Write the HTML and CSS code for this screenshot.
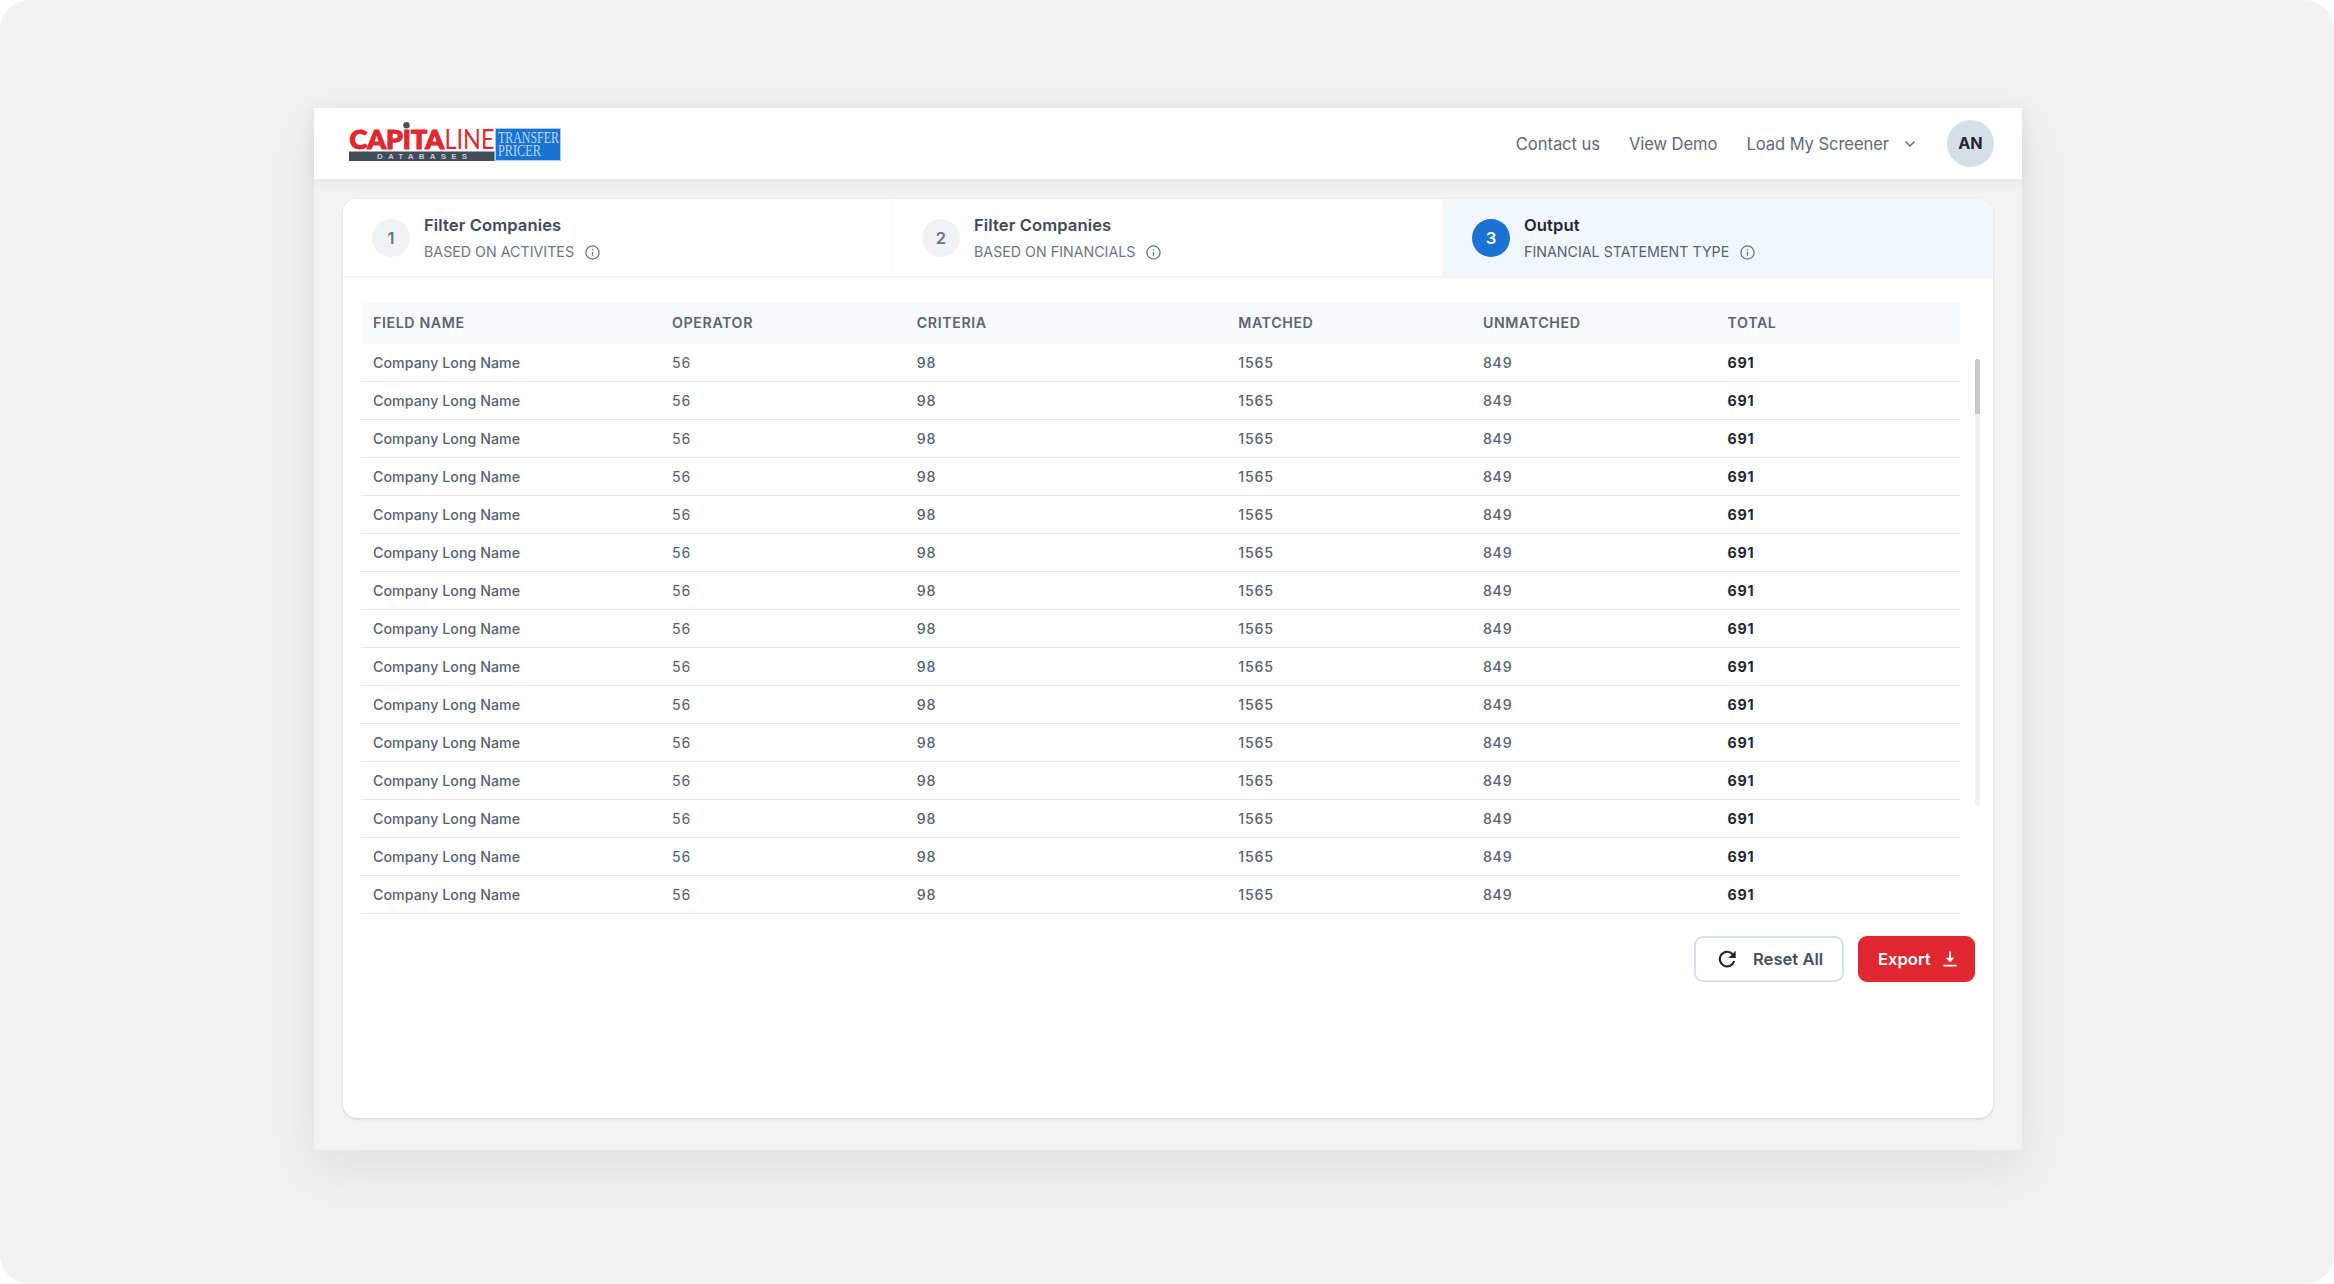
FILE: index.html
```html
<!DOCTYPE html>
<html lang="en">
<head>
    <meta charset="UTF-8">
    <meta name="viewport" content="width=device-width, initial-scale=1.0">
    <title>Capitaline Transfer Pricer</title>
    <link rel="stylesheet" href="styles.css">
</head>
<body>
    <div class="page">
        <div class="window">
            <header>
                <svg class="logo" width="213" height="40" viewBox="0 0 213 40">
                    <text class="logoBold" x="0.5" y="26.500" textLength="94.500" lengthAdjust="spacingAndGlyphs">CAPITA</text>
                    <text class="logoThin" x="95.500" y="26.800" textLength="50" lengthAdjust="spacingAndGlyphs">LINE</text>
                    <circle cx="57.5" cy="3.300" r="3.2" fill="#47525f"/>
                    <rect x="0" y="29.500" width="145.500" height="9.500" fill="#434b57"/>
                    <text class="logoSmall" x="28" y="37.300" textLength="90">DATABASES</text>
                    <rect x="146.500" y="6.500" width="65" height="32" fill="#1a73d2" stroke="#a5cdf0"/>
                    <text class="logoSerif" x="149" y="20.500" textLength="61" lengthAdjust="spacingAndGlyphs">TRANSFER</text>
                    <text class="logoSerif" x="149" y="33.500" textLength="43" lengthAdjust="spacingAndGlyphs">PRICER</text>
                </svg>
                <nav>
                    <a>Contact us</a>
                    <a>View Demo</a>
                    <a>Load My Screener</a>
                    <svg class="chevron" width="12" height="8" viewBox="0 0 12 8"><path d="M1.500 1.500 6 6l4.500-4.500"/></svg>
                    <div class="avatar">AN</div>
                </nav>
            </header>
            <main>
                <div class="tabs">
                    <div class="tab">
                        <div class="number">1</div>
                        <div class="tabText">
                            <div class="title">Filter Companies</div>
                            <div class="subtitle">BASED ON ACTIVITES
                                <svg class="info" viewBox="0 0 16 16"><circle cx="8" cy="8" r="7"/><path d="M8 7.500v4M8 4.300v1.500"/></svg>
                            </div>
                        </div>
                    </div>
                    <div class="tab">
                        <div class="number">2</div>
                        <div class="tabText">
                            <div class="title">Filter Companies</div>
                            <div class="subtitle">BASED ON FINANCIALS
                                <svg class="info" viewBox="0 0 16 16"><circle cx="8" cy="8" r="7"/><path d="M8 7.500v4M8 4.300v1.500"/></svg>
                            </div>
                        </div>
                    </div>
                    <div class="tab active">
                        <div class="number">3</div>
                        <div class="tabText">
                            <div class="title">Output</div>
                            <div class="subtitle">FINANCIAL STATEMENT TYPE
                                <svg class="info" viewBox="0 0 16 16"><circle cx="8" cy="8" r="7"/><path d="M8 7.500v4M8 4.300v1.500"/></svg>
                            </div>
                        </div>
                    </div>
                </div>
                <div class="tableContainer">
                    <table class="results">
                        <thead>
                            <tr>
                                <th class="wide">Field Name</th>
                                <th>Operator</th>
                                <th class="widest">Criteria</th>
                                <th>Matched</th>
                                <th>Unmatched</th>
                                <th>Total</th>
                            </tr>
                        </thead>
                        <tbody id="rows"></tbody>
                    </table>
                    <div class="scrollbar"><div class="thumb"></div></div>
                </div>
                <div class="buttonContainer">
                    <button class="reset">
                        <svg width="18" height="18" viewBox="0 0 18 18"><path class="arc" d="M14.600 4.200A7.300 7.300 0 1 0 16.200 11"/><path class="head" d="M17.700.8v7.200h-7.200z"/></svg>
                        Reset All
                    </button>
                    <button class="export">
                        Export
                        <svg width="14" height="16" viewBox="0 0 14 16"><path d="M7 .5v9M.5 14.700h13" /><path class="head" d="M2.800 6.800h8.400L7 11.500z"/></svg>
                    </button>
                </div>
            </main>
        </div>
    </div>

    <script>

        const rows = document.getElementById("rows");
        const numberOfRows = 15;

        for (let i = 0; i < numberOfRows; i++) {
            rows.innerHTML += `<tr>
                <td class="name">Company Long Name</td>
                <td class="operator">56</td>
                <td>98</td>
                <td>1565</td>
                <td>849</td>
                <td class="total">691</td>
            </tr>`;
        }

    </script>

</body>
</html>
```

FILE: styles.css
```css
* {
    box-sizing: border-box;
}

body {
    margin: 0;
    background-color: #fff;
    font-family: Inter, "Liberation Sans", sans-serif;
    color: #4a5565;
}

.page {
    width: 2334px;
    height: 1284px;
    padding: 108px 312px 0 314px;
    background-color: #f2f2f2;
    border-radius: 30px;
    overflow: hidden;
}

.window {
    width: 1708px;
    height: 1042px;
    background-color: #f3f3f3;
    box-shadow: 0 18px 50px rgba(60, 75, 75, 0.11);
}

header {
    display: flex;
    justify-content: space-between;
    height: 71px;
    padding: 0 28px 0 35px;
    background-color: #fff;
    box-shadow: 0 2px 14px rgba(0, 0, 0, 0.07);
}

.logo {
    margin-top: 14px;
    overflow: visible;
}

.logoBold {
    font: 900 26.5px Lato, sans-serif;
    fill: #df2830;
    stroke: #df2830;
    stroke-width: 1.2px;
}

.logoThin {
    font: 400 27px Lato, sans-serif;
    fill: #df2830;
}

.logoSmall {
    font: 700 8px "Liberation Sans", sans-serif;
    fill: #c3cad3;
}

.logoSerif {
    font: 400 16px "Liberation Serif", serif;
    fill: #b9d8f3;
}

nav {
    display: flex;
    align-items: center;
    font-size: 16.6px;
    letter-spacing: -0.08px;
    color: #5f6b7d;
}

nav a {
    margin-right: 29px;
    white-space: nowrap;
}

nav a:nth-child(3) {
    margin-right: 15px;
}

.chevron {
    margin-right: 31px;
    fill: none;
    stroke: #5f6b7d;
    stroke-width: 1.5;
}

.avatar {
    width: 47px;
    height: 47px;
    border-radius: 50%;
    background-color: #d6dee8;
    color: #1f2733;
    font-size: 16.2px;
    font-weight: 700;
    line-height: 47px;
    text-align: center;
}

main {
    width: 1650px;
    height: 919px;
    margin: 20px 0 0 29px;
    background-color: #fff;
    border-radius: 14px;
    box-shadow: 0 1px 3px rgba(0, 0, 0, 0.14);
    overflow: hidden;
}

.tabs {
    display: flex;
    height: 79px;
    border-bottom: 2px solid #f1f5f9;
}

.tab {
    display: flex;
    width: 550px;
    padding: 20px 0 0 29px;
    border-right: 1px solid #f5f7f9;
}

.number {
    width: 38px;
    height: 38px;
    margin-right: 14px;
    border-radius: 50%;
    background-color: #f0f2f5;
    color: #6b7687;
    font-size: 16.6px;
    font-weight: 600;
    line-height: 38px;
    text-align: center;
}

.title {
    margin-top: -5px;
    font-size: 16.6px;
    font-weight: 600;
    letter-spacing: 0.1px;
    line-height: 22px;
    color: #3f4a59;
}

.subtitle {
    display: flex;
    align-items: center;
    margin-top: 5px;
    font-size: 14.2px;
    letter-spacing: 0.03px;
    line-height: 22px;
    color: #6b7687;
}

.info {
    width: 15px;
    height: 15px;
    margin-left: 11px;
    fill: none;
    stroke: #6b7687;
    stroke-width: 1.4;
}

.active {
    background-color: #f2f7fe;
    border-right: none;
}

.active .number {
    background-color: #1a73d2;
    color: #fff;
}

.active .title {
    color: #1f2733;
}

.active .subtitle {
    color: #566274;
}

.tableContainer {
    display: flex;
    padding: 23px 0 0 18px;
}

.results {
    width: 1599px;
    table-layout: fixed;
    border-collapse: separate;
    border-spacing: 0;
    text-align: left;
}

.results th {
    width: 244.7px;
    height: 43px;
    padding: 0 12px;
    background-color: #f9fafc;
    font-size: 14.2px;
    font-weight: 600;
    letter-spacing: 0.62px;
    text-transform: uppercase;
    color: #5a6575;
}

.results .wide {
    width: 299px;
}

.results .widest {
    width: 321.5px;
}

.results td {
    height: 38px;
    padding: 0 12px;
    border-bottom: 1px solid #e3e5e7;
    font-size: 14.2px;
    font-weight: 450;
    letter-spacing: 0.8px;
    color: #566274;
}

.results .name {
    letter-spacing: 0.05px;
}

.results .operator {
    font-weight: 400;
}

.results .total {
    font-weight: 700;
    letter-spacing: 0.7px;
    color: #1f2733;
}

.scrollbar {
    width: 5px;
    height: 446px;
    margin: 58px 0 0 15px;
    border-radius: 3px;
    background-color: #f0f0f0;
}

.thumb {
    height: 55px;
    border-radius: 3px 3px 0 0;
    background-color: #c6c8cd;
}

.buttonContainer {
    display: flex;
    justify-content: flex-end;
    margin-top: 22px;
    padding-right: 18px;
}

.buttonContainer button {
    display: flex;
    align-items: center;
    height: 46px;
    border: none;
    border-radius: 9px;
    font-family: inherit;
    font-size: 16.6px;
    font-weight: 600;
    white-space: nowrap;
}

.buttonContainer .reset {
    width: 150px;
    margin-right: 14px;
    padding: 0 0 0 22px;
    border: 2px solid #d9e0e9;
    background-color: #fff;
    color: #465163;
}

.reset svg {
    margin-right: 17px;
}

.arc {
    fill: none;
    stroke: #1f2733;
    stroke-width: 2.2;
}

.reset .head {
    fill: #1f2733;
}

.buttonContainer .export {
    width: 117px;
    padding: 0 0 0 20px;
    background-color: #df2830;
    color: #fff;
}

.export svg {
    margin-left: 12px;
    stroke: #fff;
    stroke-width: 1.8;
}

.export .head {
    fill: #fff;
    stroke: none;
}
```
